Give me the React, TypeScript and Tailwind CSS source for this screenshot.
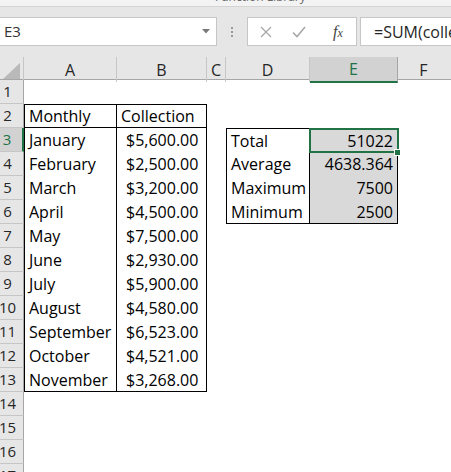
import React from "react";

const grid = "grid grid-cols-[24px_93px_90px_19px_84px_88px_1fr]";

const months: [string, string][] = [
  ["January", "5,600.00"],
  ["February", "2,500.00"],
  ["March", "3,200.00"],
  ["April", "4,500.00"],
  ["May", "7,500.00"],
  ["June", "2,930.00"],
  ["July", "5,900.00"],
  ["August", "4,580.00"],
  ["September", "6,523.00"],
  ["October", "4,521.00"],
  ["November", "3,268.00"],
];

const stats: [string, string][] = [
  ["Total", "51022"],
  ["Average", "4638.364"],
  ["Maximum", "7500"],
  ["Minimum", "2500"],
];

const RowHead = ({ n, active }: { n: number; active?: boolean }) => (
  <div
    className={
      active
        ? "flex items-center justify-center pr-2 bg-[#d2d2d2] text-[#217346] border-b border-b-[#c6c6c6] border-r-2 border-r-[#217346] text-[15px]"
        : "flex items-center justify-center pr-2 bg-[#e6e6e6] text-[#262626] border-b border-b-[#c6c6c6] border-r border-r-[#a6a6a6] text-[15px]"
    }
  >
    {n}
  </div>
);

const Cell = ({ className = "", children }: { className?: string; children?: React.ReactNode }) => (
  <div className={`flex items-center leading-[20px] text-[16px] text-black ${className}`}>{children}</div>
);

export default function App() {
  return (
    <div className="w-[451px] h-[472px] overflow-hidden bg-white font-['Open_Sans',sans-serif]">
      {/* ribbon edge */}
      <div className="h-[7px] overflow-hidden bg-[#f3f3f3] border-b border-[#d4d4d4]">
        <div className="pl-[215px] -mt-[11px] text-[12px] leading-[16px] text-[#6a6a6a]">Function Library</div>
      </div>

      {/* formula bar */}
      <div className="h-[50px] bg-[#e6e6e6] pt-[10px] flex items-start">
        <div className="w-[217px] h-[29px] bg-white border border-l-0 border-[#c6c6c6] flex items-center justify-between pl-[4px] pr-[6px]">
          <span className="text-[15px] text-[#333]">E3</span>
          <svg width="8" height="5" viewBox="0 0 8 5">
            <path d="M0 0h8L4 4.5z" fill="#7a7a7a" />
          </svg>
        </div>
        <div className="w-[30px] h-[29px] flex flex-col items-center justify-center gap-[2px]">
          <span className="w-[2px] h-[2px] bg-[#9a9a9a]" />
          <span className="w-[2px] h-[2px] bg-[#9a9a9a]" />
          <span className="w-[2px] h-[2px] bg-[#9a9a9a]" />
        </div>
        <div className="w-[110px] h-[29px] bg-white border border-[#c6c6c6] flex items-center">
          <div className="w-[36px] flex justify-center">
            <svg width="12" height="12" viewBox="0 0 12 12">
              <path d="M1 1l10 10M11 1L1 11" stroke="#a8a8a8" strokeWidth="1.3" fill="none" />
            </svg>
          </div>
          <div className="w-[30px] flex justify-center">
            <svg width="14" height="12" viewBox="0 0 14 12">
              <path d="M1 6.5l4 4L13 1" stroke="#a8a8a8" strokeWidth="1.6" fill="none" />
            </svg>
          </div>
          <div className="flex-1 flex justify-center pl-[6px]">
            <span className="font-['Liberation_Serif',serif] italic text-[16px] text-[#444] leading-none">
              f<span className="text-[12px]">x</span>
            </span>
          </div>
        </div>
        <div className="ml-[3px] flex-1 h-[29px] bg-white border border-r-0 border-[#c6c6c6] flex items-center pl-[13px] overflow-hidden whitespace-nowrap">
          <span className="text-[16px] text-[#262626]">=SUM(collection)</span>
        </div>
      </div>

      {/* column headers */}
      <div className={`${grid} h-[23px] bg-[#e6e6e6] border-b border-[#a6a6a6] text-[16px] text-[#262626]`}>
        <div className="border-r border-[#c6c6c6] flex items-end justify-end pr-[3px] pb-[3px]">
          <svg width="17" height="16" viewBox="0 0 17 16">
            <path d="M17 0V16H0z" fill="#b9b9b9" />
          </svg>
        </div>
        <div className="border-r border-[#c6c6c6] flex items-center justify-center">A</div>
        <div className="border-r border-[#c6c6c6] flex items-center justify-center">B</div>
        <div className="border-r border-[#c6c6c6] flex items-center justify-center">C</div>
        <div className="border-r border-[#c6c6c6] flex items-center justify-center">D</div>
        <div className="bg-[#d2d2d2] border-r border-[#a6a6a6] border-b-2 border-b-[#217346] -mb-[1px] flex items-center justify-center text-[#217346]">E</div>
        <div className="flex items-center justify-center pr-[2px]">F</div>
      </div>

      {/* row 1 */}
      <div className={`${grid} h-[24px]`}>
        <RowHead n={1} />
      </div>

      {/* row 2 */}
      <div className={`${grid} h-[24px]`}>
        <RowHead n={2} />
        <Cell className="border border-black pl-[4px]">Monthly</Cell>
        <Cell className="border border-l-0 border-black pl-[4px]">Collection</Cell>
      </div>

      {months.map(([m, amt], i) => {
        const n = i + 3;
        const last = n === 13;
        const stat = stats[i];
        return (
          <div key={m} className={`${grid} h-[24px]`}>
            <RowHead n={n} active={n === 3} />
            <Cell className={last ? "border-l border-r border-b border-black pl-[4px]" : "border-l border-r border-black pl-[4px]"}>{m}</Cell>
            <Cell className={last ? "border-r border-b border-black pl-[9px] pr-[8px] justify-between" : "border-r border-black pl-[9px] pr-[8px] justify-between"}>
              <span>$</span>
              <span>{amt}</span>
            </Cell>
            <div />
            {stat ? (
              <>
                <Cell
                  className={
                    n === 3
                      ? "border-l border-r border-t border-black pl-[4px]"
                      : n === 6
                      ? "border-l border-r border-b border-black pl-[4px]"
                      : "border-l border-r border-black pl-[4px]"
                  }
                >
                  {stat[0]}
                </Cell>
                <Cell
                  className={
                    n === 3
                      ? "relative bg-[#d9d9d9] border-r border-t border-black justify-end pr-[4px]"
                      : n === 6
                      ? "bg-[#d9d9d9] border-r border-b border-black justify-end pr-[4px]"
                      : "bg-[#d9d9d9] border-r border-black justify-end pr-[4px]"
                  }
                >
                  {stat[1]}
                  {n === 3 && (
                    <>
                      <div className="absolute -left-[1px] -top-[1px] -right-[2px] -bottom-[1px] border-2 border-[#217346]" />
                      <div className="absolute -right-[4px] -bottom-[4px] w-[7px] h-[7px] bg-[#217346] border border-white" />
                    </>
                  )}
                </Cell>
              </>
            ) : null}
          </div>
        );
      })}

      {[14, 15, 16, 17].map((n) => (
        <div key={n} className={`${grid} h-[24px]`}>
          <RowHead n={n} />
        </div>
      ))}
    </div>
  );
}
